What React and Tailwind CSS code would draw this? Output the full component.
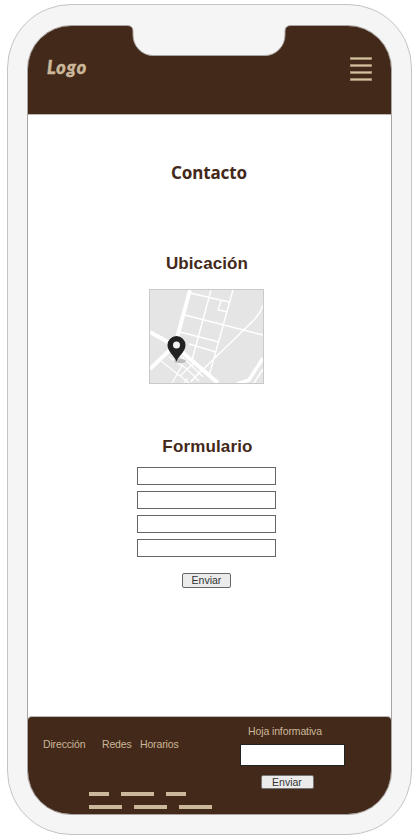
import React from "react";

function Notch() {
  return (
    <svg className="absolute left-[98px] top-[-1px]" width="168" height="33" viewBox="0 0 168 33" fill="none">
      <path d="M2 0V1.5Q8 1.5 8 7V10.5A20 20.5 0 0 0 28 31.5H140A20 20.5 0 0 0 160 10.5V7Q160 1.5 166 1.5V0Z" fill="#f5f5f5" />
      <path d="M2 1.5Q8 1.5 8 7V10.5A20 20.5 0 0 0 28 31.5H140A20 20.5 0 0 0 160 10.5V7Q160 1.5 166 1.5" stroke="#aaa5a2" />
    </svg>
  );
}

function Header() {
  return (
    <header className="flex h-[89px] shrink-0 items-start justify-between border-b border-[#bdb8b5] bg-[#43291a] pl-[19px] pr-[19px] text-[#cbb799]">
      <span className="mt-[29px] font-['Lato'] text-[18px] font-black italic leading-6 tracking-[1px] [-webkit-text-stroke:0.5px_#cbb799]">Logo</span>
      <div className="mt-[31px] flex flex-col gap-1">
        {[0, 1, 2, 3].map((n) => (
          <span key={n} className="h-[3px] w-[22px] border border-[#9e8a6e] bg-[#d5c29f]" />
        ))}
      </div>
    </header>
  );
}

function LocationMap() {
  return (
    <svg className="mt-[13px] block" width="115" height="95" viewBox="0 0 115 95" fill="none">
      <rect x=".5" y=".5" width="114" height="94" fill="#e5e5e5" />
      <g stroke="#fff">
        <path d="M41 1L28 49" strokeWidth="4" />
        <path d="M1 43L26 57L69 94M1 80L25 57" strokeWidth="4" />
        <path d="M88 95L100 91L114 69" strokeWidth="3.5" />
        <path d="M105 94L114 80" strokeWidth="1.5" />
        <path d="M41 4L80 13M36 26L114 46M31 43L70 53M40 55L67 63M62 1L43 71M84 1L60 87M72 12L69 21L79 23M42 92L105 31Q112 23 114 16" strokeWidth="1.4" />
        <path d="M12 72L40 94M20 68L38 80L50 92M26 62L40 74L54 88M34 75L23 94M46 73L31 87M53 80L42 93M39 89L35 94" strokeWidth="1.2" />
      </g>
      <rect x=".5" y=".5" width="114" height="94" stroke="#c9c9c9" />
      <ellipse cx="31" cy="72" rx="6" ry="2" fill="#bcbcbc" />
      <path d="M27.5 72.500C25 66 18.5 63 18.5 56a9 9 0 0 1 18 0C36.500 63 30 66 27.500 72.500Z" fill="#222" />
      <circle cx="27.500" cy="56" r="3.500" fill="#f3f3f3" />
    </svg>
  );
}

function SendButton({ className }) {
  return (
    <button className={`flex items-center justify-center rounded-[2px] border bg-[#ebebeb] text-[10.5px] leading-none text-[#333] ${className}`}>
      Enviar
    </button>
  );
}

function ContactPage() {
  return (
    <main className="flex flex-1 flex-col items-center pr-[6px] text-[#43291a]">
      <h1 className="ml-[5px] mt-[46px] font-['Noto_Sans'] text-[17px] font-bold leading-6 tracking-[-0.1px]">Contacto</h1>
      <h2 className="ml-px mt-[67px] text-[17px] font-bold leading-6 tracking-[0.1px]">Ubicación</h2>
      <LocationMap />
      <h2 className="ml-[2px] mt-[51px] text-[17px] font-bold leading-6 tracking-[0.15px]">Formulario</h2>
      <div className="mt-[8px] flex flex-col gap-[6px]">
        {[0, 1, 2, 3].map((n) => (
          <input key={n} className="h-[18px] w-[139px] border border-[#666] bg-white" />
        ))}
      </div>
      <SendButton className="mt-[16px] h-[15px] w-[49px] border-[#666]" />
    </main>
  );
}

function TextBars() {
  return (
    <div className="flex flex-col gap-[9px]">
      <div className="flex gap-[12px]">
        <span className="h-1 w-[20px] bg-[#cbb799]" />
        <span className="h-1 w-[33px] bg-[#cbb799]" />
        <span className="h-1 w-[20px] bg-[#cbb799]" />
      </div>
      <div className="flex gap-[12px]">
        <span className="h-1 w-[33px] bg-[#cbb799]" />
        <span className="h-1 w-[33px] bg-[#cbb799]" />
        <span className="h-1 w-[33px] bg-[#cbb799]" />
      </div>
    </div>
  );
}

function Footer() {
  return (
    <footer className="flex h-[98px] shrink-0 rounded-t-[4px] border-t border-[#bdb8b5] bg-[#43291a] text-[10.500px] leading-3 text-[#cbb799]">
      <div className="w-[212px] pt-[21px]">
        <nav className="flex pl-[15px] tracking-[-0.15px]">
          <span className="w-[59px]">Dirección</span>
          <span className="w-[38px]">Redes</span>
          <span>Horarios</span>
        </nav>
        <div className="pl-[61px] pt-[42px]"><TextBars /></div>
      </div>
      <div className="flex w-[104px] flex-col items-center pt-[8px]">
        <span className="mr-[14px] whitespace-nowrap tracking-[-0.12px]">Hoja informativa</span>
        <input className="mt-[7px] h-[22px] w-[105px] shrink-0 border border-[#222] bg-white" />
        <SendButton className="mr-[10px] mt-[9px] h-[14px] w-[53px] border-[#747474]" />
      </div>
    </footer>
  );
}

export default function App() {
  return (
    <div className="h-[840px] w-[420px] overflow-hidden bg-white pl-[7px] pt-[4px] font-['Liberation_Sans',Arial,sans-serif]">
      <div className="h-[831px] w-[405px] rounded-[64px] border border-[#c4c4c4] bg-[#f5f5f5] pl-[19px] pt-[20px]">
        <div className="relative h-[790px] w-[365px]">
          <div className="flex h-full flex-col overflow-hidden rounded-[44px] border border-[#aaa5a2] bg-white">
            <Header />
            <ContactPage />
            <Footer />
          </div>
          <Notch />
        </div>
      </div>
    </div>
  );
}
